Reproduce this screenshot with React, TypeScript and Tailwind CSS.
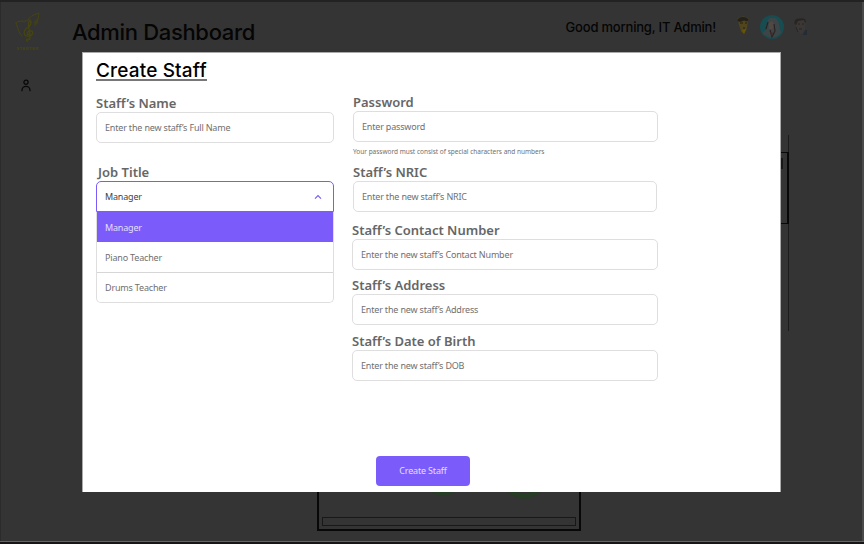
import React from "react";

function Logo() {
  return (
    <svg width="26" height="40" viewBox="0 0 26 40" fill="none" stroke="#46450f" strokeWidth="1" strokeLinecap="round">
      <path d="M1 11 C3 15 3 20 7 24" />
      <path d="M1 11 C5 7 9 11 13 8 C14 5 18 3 24 1 C23 5 24 8 21 11" />
      <path d="M13 29 C11 30 11 26 13 27 C16 29 15 24 14.500 19 C13 14 13 10 15 8 C17 10 16 14 12 16 C7 20 9 25 14 24 C20 23 18 16 13 20 C11 22 13 23 14 22" strokeWidth="1.300" />
      <path d="M20 9 v5 M22 7 v5" />
      <text x="1.500" y="38" fill="#46450f" stroke="none" fontSize="4.4" fontWeight="700" textLength="22" fontFamily="Liberation Sans, sans-serif">STARTER</text>
    </svg>
  );
}

function UserIcon() {
  return (
    <svg width="10" height="13" viewBox="0 0 10 13" fill="none" stroke="#080808" strokeWidth="1.3" strokeLinecap="round">
      <circle cx="5" cy="3.2" r="2.1" />
      <path d="M1 11.7 V11 A4 3.6 0 0 1 9 11 V11.7" />
    </svg>
  );
}

function Avatars() {
  return (
    <svg width="76" height="26" viewBox="0 0 76 26" fill="none">
      <path d="M5.500 4 Q11 1 16.500 4 L15 14 L12 20 L9.500 18 L7 11Z" fill="#50451c" />
      <path d="M5.500 7 Q5.500 3 11 3 Q16 3 16.500 6 L15 7.500 L12 6.500 L8 8Z" fill="#24211a" />
      <path d="M8 9 h3 M13 9 h2 M11 14 h2" stroke="#25200f" />
      <path d="M9.500 16 L12 20 L14.500 15" fill="#675407" />
      <circle cx="40" cy="13" r="12" fill="#174c51" />
      <path d="M35 8 Q36 3 41 4 Q46 3 47 10 L49 19 Q46 23 40 24 Q33 22 30 19 L34 16Z" fill="#3c4548" />
      <path d="M37 9 Q40 5 42 10 L41 15 L37 15Z" fill="#514844" />
      <path d="M36 8 L34 15 M42 10 L43 17 L40 23 L38 16" stroke="#2a2220" strokeWidth="1.1" />
      <path d="M38 18 L41 19 L40 23Z" fill="#4a2925" />
      <path d="M63 8 Q62 3 68 4 Q74 3 74 8 L73 16 L69 20 L66 18 L64 13Z" fill="#3a3736" />
      <path d="M62.500 10 Q62 4 67 4.500 Q74 3 74 8 L73 9 L72 6 L66 7 L64 11Z" fill="#272422" />
      <path d="M66 10 h2 M70 10 h2 M67 15 h3 M64 13 L66 18" stroke="#272422" />
      <path d="M73 16 h2 v5 h-4Z" fill="#252b35" />
    </svg>
  );
}

const fieldBox = "flex items-center rounded-[5px] border border-[#dedede] bg-white px-2 text-[9px] tracking-[-0.18px] text-[#707070]";

type FieldProps = { label: string; placeholder: string; className?: string };

function Field({ label, placeholder, className = "" }: FieldProps) {
  return (
    <div className={className}>
      <div className="h-[18px] text-[13px] leading-[18px] font-semibold whitespace-nowrap text-[#666]">{label}</div>
      <div className={`${fieldBox} h-[31px]`}>{placeholder}</div>
    </div>
  );
}

function JobSelect() {
  return (
    <div className="mt-5 tracking-[-0.18px]">
      <div className="h-[18px] pl-[2px] text-[13px] leading-[18px] font-semibold tracking-normal text-[#666]">Job Title</div>
      <div className="flex h-[31px] items-center justify-between rounded-t-[5px] border border-[#7b5cfa] px-2 text-[9px] text-[#3f3f3f]">
        Manager
        <svg className="mr-[3px]" width="8" height="6" viewBox="0 0 8 6" fill="none" stroke="#7b5cfa" strokeWidth="1.2">
          <path d="M1 4.600 L4 1.600 L7 4.600" />
        </svg>
      </div>
      <div className="overflow-hidden rounded-b-[5px] border-x border-b border-[#dedede] text-[9px] text-[#707070]">
        <div className="flex h-[30px] items-center bg-[#7b5cfa] px-2 pt-px text-[#e5deff]">Manager</div>
        <div className="flex h-[31px] items-center border-b border-[#d6d6d6] px-2 pt-px">Piano Teacher</div>
        <div className="flex h-[29px] items-center px-2">Drums Teacher</div>
      </div>
    </div>
  );
}

function Dashboard() {
  return (
    <div className="flex h-[544px] flex-col border-t-2 border-[#222] bg-[#343434] font-['Inter',sans-serif] text-[#050505]">
      <div className="flex h-[539px] border-r-2 border-l border-r-[#4a4a4a] border-l-[#2b2b2b]">
        <aside className="flex w-[71px] shrink-0 flex-col pt-[10px] pl-[14px]">
          <Logo />
          <div className="mt-[27px] ml-[6px]"><UserIcon /></div>
        </aside>
        <main className="flex grow flex-col">
          <header className="flex h-[50px] items-start justify-between pr-[54px]">
            <h1 className="mt-4 text-[22px] leading-[28px] font-medium tracking-[-0.33px] whitespace-nowrap">Admin Dashboard</h1>
            <div className="flex items-start">
              <span className="mt-[15px] mr-4 text-[13px] leading-5 font-medium tracking-[-0.2px] whitespace-nowrap">Good morning, IT Admin!</span>
              <div className="mt-3"><Avatars /></div>
            </div>
          </header>
          <section className="mt-[83px] ml-[30px] h-[196px] w-[687px] border-r border-[#1c1c1c]">
            <div className="h-[17px]" />
            <div className="-mr-px flex h-[72px] justify-end border-y border-r-2 border-[#080808] pt-[5px] pr-1">
              <div className="h-[11px] w-10 border-2 border-[#171717]" />
            </div>
          </section>
          <section className="mt-[20px] ml-[245px] flex h-[180px] w-[264px] flex-col justify-end border-2 border-[#080808] p-[3px]">
            <svg width="254" height="120" viewBox="0 0 254 120" className="mb-[6px]" fill="none" stroke="#273d25" strokeWidth="5">
              <circle cx="121" cy="84" r="18" />
              <circle cx="202" cy="85" r="20" />
            </svg>
            <div className="h-[9px] shrink-0 border border-[#181818]" />
          </section>
        </main>
      </div>
      <div className="h-px bg-[#646464]" />
      <div className="h-[2px] bg-[#181517]" />
    </div>
  );
}

export default function App() {
  return (
    <div className="relative h-[544px] w-[864px] overflow-hidden">
      <Dashboard />
      <div className="absolute top-[52px] left-[82px] flex h-[440px] w-[699px] flex-col border-t border-r border-l border-[#aaa] bg-white pl-[13px] font-['Noto_Sans',sans-serif]">
        <h2 className="h-[28px] w-[111px] border-b-2 border-[#777] pt-[5px] font-['Inter',sans-serif] text-[19px] leading-[26px] font-medium tracking-[0.16px] whitespace-nowrap text-black">Create Staff</h2>
        <div className="mt-3 flex gap-[18px]">
          <div className="w-[238px] pt-px">
            <Field label="Staff’s Name" placeholder="Enter the new staff’s Full Name" />
            <JobSelect />
          </div>
          <div className="w-[305px]">
            <Field label="Password" placeholder="Enter password" className="w-[306px] pl-px" />
            <div className="h-[21px] pt-1 pl-px text-[6.5px] leading-[12px] tracking-[-0.01px] whitespace-nowrap text-[#707070]">Your password must consist of special characters and numbers</div>
            <Field label="Staff’s NRIC" placeholder="Enter the new staff’s NRIC" className="pl-px" />
            <Field label="Staff’s Contact Number" placeholder="Enter the new staff’s Contact Number" className="mt-[9px] w-[306px]" />
            <Field label="Staff’s Address" placeholder="Enter the new staff’s Address" className="mt-[6px] w-[306px]" />
            <Field label="Staff’s Date of Birth" placeholder="Enter the new staff’s DOB" className="mt-[7px] w-[306px]" />
          </div>
        </div>
        <button className="mt-[75px] ml-[280px] h-[30px] w-[94px] shrink-0 rounded-[4px] bg-[#7b5cfa] text-[9px] tracking-[-0.18px] text-[#e5deff]">Create Staff</button>
      </div>
    </div>
  );
}
